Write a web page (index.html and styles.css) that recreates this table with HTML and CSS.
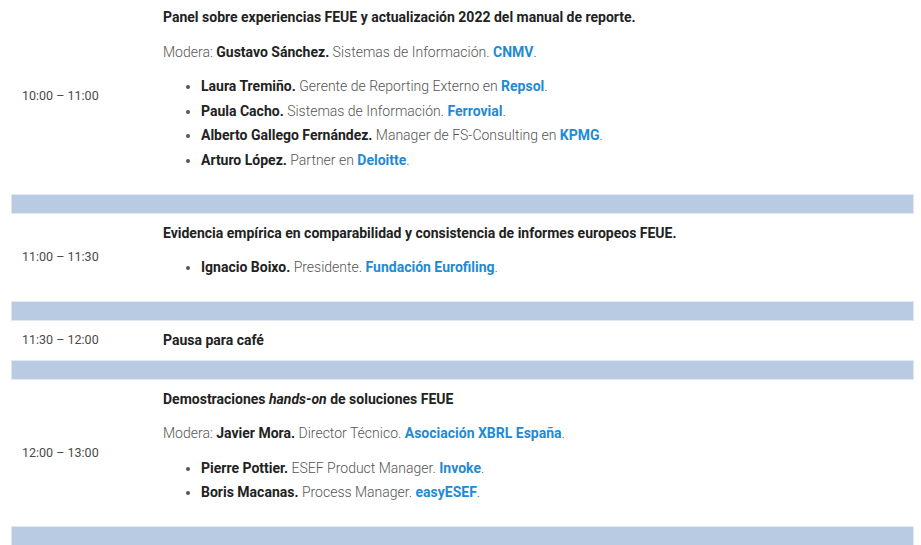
FILE: index.html
```html
<!DOCTYPE html>
<html lang="es">
<head>
<meta charset="utf-8">
<title>Programa</title>
<link rel="stylesheet" href="styles.css">
</head>
<body>
<div class="schedule">
  <div class="row first">
    <div class="time">10:00 – 11:00</div>
    <div class="content">
      <p class="title">Panel sobre experiencias FEUE y actualización 2022 del manual de reporte.</p>
      <p class="mod">Modera: <b>Gustavo Sánchez.</b> Sistemas de Información. <a class="org">CNMV</a>.</p>
      <ul>
        <li><b>Laura Tremiño.</b> Gerente de Reporting Externo en <a class="org">Repsol</a>.</li>
        <li><b>Paula Cacho.</b> Sistemas de Información. <a class="org">Ferrovial</a>.</li>
        <li><b>Alberto Gallego Fernández.</b> Manager de FS-Consulting en <a class="org">KPMG</a>.</li>
        <li><b>Arturo López.</b> Partner en <a class="org">Deloitte</a>.</li>
      </ul>
    </div>
  </div>
  <div class="sep"></div>
  <div class="row">
    <div class="time">11:00 – 11:30</div>
    <div class="content">
      <p class="title">Evidencia empírica en comparabilidad y consistencia de informes europeos FEUE.</p>
      <ul>
        <li><b>Ignacio Boixo.</b> Presidente. <a class="org">Fundación Eurofiling</a>.</li>
      </ul>
    </div>
  </div>
  <div class="sep"></div>
  <div class="row">
    <div class="time">11:30 – 12:00</div>
    <div class="content">
      <p class="title last">Pausa para café</p>
    </div>
  </div>
  <div class="sep"></div>
  <div class="row">
    <div class="time">12:00 – 13:00</div>
    <div class="content">
      <p class="title">Demostraciones <i>hands-on</i> de soluciones FEUE</p>
      <p class="mod">Modera: <b>Javier Mora.</b> Director Técnico. <a class="org">Asociación XBRL España</a>.</p>
      <ul>
        <li><b>Pierre Pottier.</b> ESEF Product Manager. <a class="org">Invoke</a>.</li>
        <li><b>Boris Macanas.</b> Process Manager. <a class="org">easyESEF</a>.</li>
      </ul>
    </div>
  </div>
  <div class="sep"></div>
</div>
</body>
</html>
```

FILE: styles.css
```css
html, body {
  margin: 0;
  padding: 0;
  background: #ffffff;
}
body {
  font-family: Roboto, "Liberation Sans", sans-serif;
  font-size: 14px;
  line-height: 24.5px;
  color: #555555;
}
.schedule {
  margin-left: 11px;
  width: 903px;
}
.row {
  display: grid;
  grid-template-columns: 141px 1fr;
  align-items: center;
  padding: 7px 0;
}
.row.first {
  padding-top: 5px;
}
.time {
  padding-left: 11px;
  color: #4a4a4a;
  font-size: 12.5px;
  font-weight: 400;
}
.content {
  padding-left: 11px;
}
.content p {
  margin: 0 0 10px;
}
.content p.last {
  margin: 0;
}
.title {
  font-weight: 700;
  color: #222222;
}
.mod {
  font-weight: 300;
  color: #555555;
}
b {
  font-weight: 700;
  color: #222222;
}
i {
  font-style: italic;
}
ul {
  margin: 0 0 14.5px;
  padding-left: 38px;
  font-weight: 300;
  color: #555555;
}
a.org {
  color: #1f8ad3;
  font-weight: 700;
  text-decoration: none;
}
.sep {
  height: 18px;
  background: #b8cbe2;
  border: 1px solid #dfe8f3;
}
```
